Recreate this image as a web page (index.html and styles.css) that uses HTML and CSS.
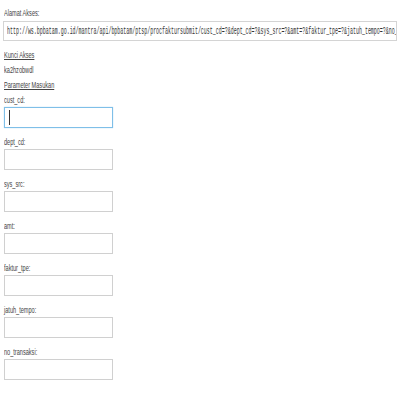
FILE: index.html
```html
<!DOCTYPE html>
<html lang="id">
<head>
<meta charset="utf-8">
<title>Akses API</title>
<link rel="stylesheet" href="styles.css">
</head>
<body>
<div class="page">
  <div class="line first"><span class="txt">Alamat Akses:</span></div>
  <div class="urlbox"><span class="mono">http://ws.bpbatam.go.id/mantra/api/bpbatam/ptsp/procfaktursubmit/cust_cd=?&amp;dept_cd=?&amp;sys_src=?&amp;amt=?&amp;faktur_tpe=?&amp;jatuh_tempo=?&amp;no_transaksi=?</span></div>
  <div class="line head"><a class="txt link" href="#">Kunci Akses</a></div>
  <div class="line"><span class="txt">ka2hzobwdl</span></div>
  <div class="line"><a class="txt link" href="#">Parameter Masukan</a></div>
  <div class="group">
    <div class="lbl"><span class="txt">cust_cd:</span></div>
    <div class="field focused"><input type="text" name="cust_cd"><span class="caret"></span></div>
  </div>
  <div class="group">
    <div class="lbl"><span class="txt">dept_cd:</span></div>
    <div class="field"><input type="text" name="dept_cd"></div>
  </div>
  <div class="group">
    <div class="lbl"><span class="txt">sys_src:</span></div>
    <div class="field"><input type="text" name="sys_src"></div>
  </div>
  <div class="group">
    <div class="lbl"><span class="txt">amt:</span></div>
    <div class="field"><input type="text" name="amt"></div>
  </div>
  <div class="group">
    <div class="lbl"><span class="txt">faktur_tpe:</span></div>
    <div class="field"><input type="text" name="faktur_tpe"></div>
  </div>
  <div class="group">
    <div class="lbl"><span class="txt">jatuh_tempo:</span></div>
    <div class="field"><input type="text" name="jatuh_tempo"></div>
  </div>
  <div class="group">
    <div class="lbl"><span class="txt">no_transaksi:</span></div>
    <div class="field"><input type="text" name="no_transaksi"></div>
  </div>
</div>
</body>
</html>
```
FILE: styles.css
```css
html, body {
  margin: 0;
  padding: 0;
  background: #ffffff;
}
body {
  font-family: "Liberation Sans", Arial, sans-serif;
  font-size: 9px;
  color: #444444;
}
.page {
  padding: 6px 0 0 4px;
}
.txt {
  display: inline-block;
  transform: scaleX(0.62);
  transform-origin: 0 50%;
  white-space: nowrap;
  color: #444444;
}
.link {
  text-decoration: underline;
}
.line {
  height: 15px;
  line-height: 15px;
}
.line.first {
  height: 15px;
  line-height: 14px;
}
.line.head {
  margin-top: 7px;
}
.urlbox {
  box-sizing: border-box;
  width: 394px;
  height: 20px;
  margin-left: -1px;
  border: 1px solid #d4d4d4;
  background: #ffffff;
  overflow: hidden;
  white-space: nowrap;
  line-height: 18px;
  padding-left: 3px;
}
.mono {
  display: inline-block;
  font-family: "Liberation Mono", "Courier New", monospace;
  font-size: 10px;
  color: #333333;
  transform: scaleX(0.497);
  transform-origin: 0 50%;
}
.group {
  padding-bottom: 7px;
}
.group:first-of-type {
  margin-top: 2px;
}
.lbl {
  height: 14px;
  line-height: 14px;
}
.field {
  position: relative;
  width: 109px;
  height: 21px;
}
.field input {
  box-sizing: border-box;
  width: 109px;
  height: 21px;
  margin: 0;
  padding: 0 3px;
  border: 1px solid #d0d0d0;
  background: #ffffff;
  outline: none;
  font-family: "Liberation Sans", Arial, sans-serif;
  font-size: 9px;
}
.field.focused input {
  border-color: #7fbfe8;
  box-shadow: 0 0 1px #a8d4f0;
}
.caret {
  position: absolute;
  left: 5px;
  top: 3px;
  width: 1px;
  height: 15px;
  background: #333333;
}
```
